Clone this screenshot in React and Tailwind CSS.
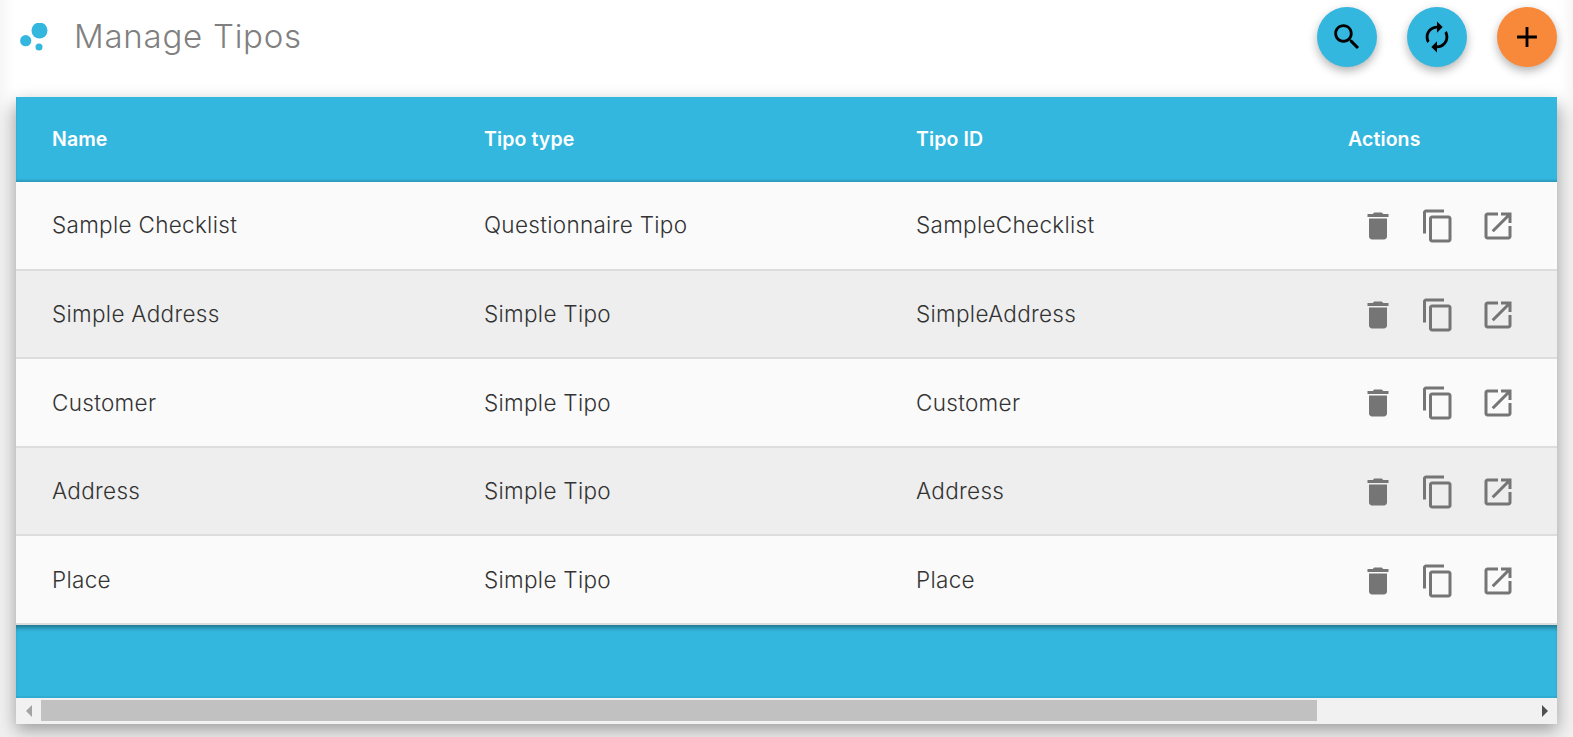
const ROWS = [
  { name: "Sample Checklist", type: "Questionnaire Tipo", id: "SampleChecklist" },
  { name: "Simple Address", type: "Simple Tipo", id: "SimpleAddress" },
  { name: "Customer", type: "Simple Tipo", id: "Customer" },
  { name: "Address", type: "Simple Tipo", id: "Address" },
  { name: "Place", type: "Simple Tipo", id: "Place" },
];

function Icon({ d, className }) {
  return (
    <svg viewBox="0 0 24 24" fill="currentColor" className={className}>
      <path d={d} />
    </svg>
  );
}

const SEARCH =
  "M15.5 14h-.79l-.28-.27C15.41 12.59 16 11.11 16 9.5 16 5.91 13.09 3 9.5 3S3 5.91 3 9.5 5.91 16 9.5 16c1.61 0 3.09-.59 4.23-1.57l.27.28v.79l5 4.99L20.49 19l-4.99-5zm-6 0C7.01 14 5 11.99 5 9.5S7.01 5 9.5 5 14 7.01 14 9.5 11.99 14 9.5 14z";
const RENEW =
  "M12 6v3l4-4-4-4v3c-4.42 0-8 3.58-8 8 0 1.57.46 3.03 1.24 4.26L6.7 14.8c-.45-.83-.7-1.79-.7-2.8 0-3.31 2.69-6 6-6zm6.76 1.74L17.3 9.2c.44.84.7 1.79.7 2.8 0 3.31-2.69 6-6 6v-3l-4 4 4 4v-3c4.42 0 8-3.58 8-8 0-1.57-.46-3.03-1.24-4.26z";
const ADD = "M19 13h-6v6h-2v-6H5v-2h6V5h2v6h6v2z";
const TRASH =
  "M6 19c0 1.1.9 2 2 2h8c1.1 0 2-.9 2-2V7H6v12zM19 4h-3.5l-1-1h-5l-1 1H5v2h14V4z";
const COPY =
  "M16 1H4c-1.1 0-2 .9-2 2v14h2V3h12V1zm3 4H8c-1.1 0-2 .9-2 2v14c0 1.1.9 2 2 2h11c1.1 0 2-.9 2-2V7c0-1.1-.9-2-2-2zm0 16H8V7h11v14z";
const OPEN =
  "M19 19H5V5h7V3H5c-1.11 0-2 .9-2 2v14c0 1.1.89 2 2 2h14c1.1 0 2-.9 2-2v-7h-2v7zM14 3v2h3.59l-9.83 9.83 1.41 1.41L19 6.41V10h2V3h-7z";

function Fab({ d, orange }) {
  return (
    <button
      className={`flex h-[60px] w-[60px] items-center justify-center rounded-full text-black shadow-[0_4px_10px_rgba(0,0,0,0.3)] ${
        orange ? "bg-[#f8893a]" : "bg-[#34b7df]"
      }`}
    >
      <Icon d={d} className="h-[34px] w-[34px]" />
    </button>
  );
}

export default function App() {
  return (
    <div className="h-[737px] overflow-hidden bg-[#f0f0f0] font-['Inter',sans-serif]">
      <header className="mx-4 flex h-[97px] bg-white pl-1 pt-[7px] shadow-[0_0_16px_14px_#fff]">
        <svg viewBox="0 0 34 34" className="mt-4 h-[34px] w-[34px] text-[#34b7df]" fill="currentColor">
          <circle cx="19.5" cy="7.5" r="8" />
          <circle cx="5.7" cy="17.7" r="5.6" />
          <circle cx="19" cy="24" r="3.5" />
        </svg>
        <h1 className="ml-5 mt-[9px] text-[33px] font-light leading-10 tracking-[0.75px] text-[#808080]">Manage Tipos</h1>
        <div className="ml-auto flex gap-[30px]">
          <Fab d={SEARCH} />
          <Fab d={RENEW} />
          <Fab d={ADD} orange />
        </div>
      </header>

      <main className="relative mx-4 shadow-[0_6px_16px_rgba(0,0,0,0.35)]">
        <div className="overflow-hidden">
          <div className="grid h-[85px] w-[1728px] grid-cols-[432px_432px_432px_432px] items-center bg-[#34b7df] text-[19.5px] font-semibold tracking-[0.1px] text-white shadow-[inset_0_-2px_2px_rgba(0,0,0,0.15)]">
            <div className="pl-9">Name</div>
            <div className="pl-9">Tipo type</div>
            <div className="pl-9">Tipo ID</div>
            <div className="pl-9">Actions</div>
          </div>
          {ROWS.map((row, i) => (
            <div
              key={row.id}
              className={`grid h-[88.6px] w-[1728px] grid-cols-[432px_432px_432px_432px] items-center border-b-2 border-[#dddddd] text-[22.5px] font-light tracking-[0.3px] text-[#333333] ${
                i % 2 ? "bg-[#eeeeee]" : "bg-[#fafafa]"
              }`}
            >
              <div className="pl-9">{row.name}</div>
              <div className="pl-9">{row.type}</div>
              <div className="pl-9">{row.id}</div>
              <div className="flex pl-9 pt-[2px] text-[#757575]">
                <button className="flex w-[60px] justify-center"><Icon d={TRASH} className="h-9 w-9" /></button>
                <button className="flex w-[60px] justify-center"><Icon d={COPY} className="h-9 w-9" /></button>
                <button className="flex w-[60px] justify-center"><Icon d={OPEN} className="h-9 w-9" /></button>
              </div>
            </div>
          ))}
          <div className="h-[73px] bg-[#34b7df] shadow-[inset_0_5px_4px_-2px_rgba(0,0,0,0.35),inset_0_-2px_0_rgba(0,0,0,0.06)]" />
        </div>
        <div className="flex h-[26px] items-center bg-[#f1f1f1]">
          <div className="flex w-[25px] justify-center">
            <div className="h-0 w-0 border-y-[6px] border-r-[6px] border-y-transparent border-r-[#a3a3a3]" />
          </div>
          <div className="h-[21px] w-[1276px] bg-[#c1c1c1]" />
          <div className="ml-auto flex w-[25px] justify-center">
            <div className="h-0 w-0 border-y-[6px] border-l-[6px] border-y-transparent border-l-[#505050]" />
          </div>
        </div>
      </main>
    </div>
  );
}
